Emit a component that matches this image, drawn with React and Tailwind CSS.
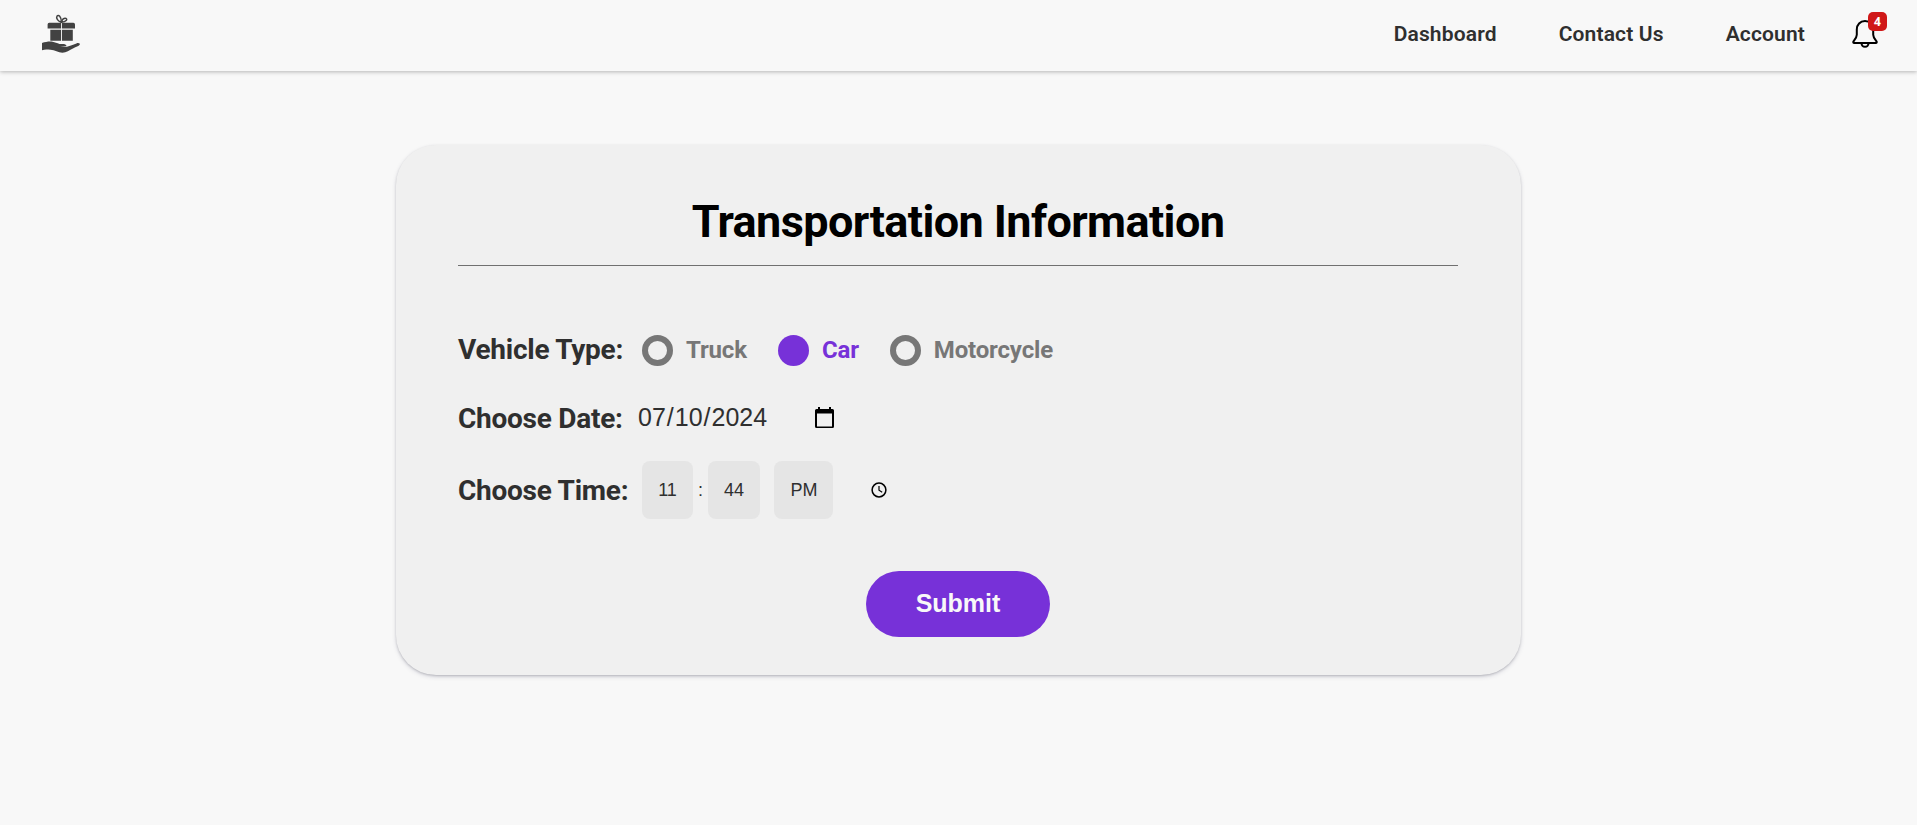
function GiftLogo() {
  return (
    <svg className="h-10 w-10" viewBox="0 0 40 40" fill="#424242">
      <g fill="none" stroke="#424242" strokeWidth="1.5">
        <path d="M20.300 9.200C17 8.200 14.800 5.200 16 3.200c1.300-1.900 4.500-.2 4.300 6z" />
        <path d="M20.500 9.200c.4-2.900 2.700-4.600 4.500-3.800 1.600.9.400 3.300-4.500 3.800z" />
      </g>
      <path d="M8.200 9.800h11.900v5.800H6.600v-4.200a1.600 1.600 0 0 1 1.600-1.600zM21 9.800h11.400a1.600 1.600 0 0 1 1.600 1.600v4.200H21z" />
      <path d="M9.300 16.800h10.800v11H9.300zM21 16.800h10.800v11H21z" />
      <path d="M1 29.900c3.500-.7 7-1.700 10.500-1.100 2.500.4 4.500 1.500 7 2.200h4.200c1.600.2 2.900.8 2.700 2.100l-6.300.3 6.900.3c3.200-1 6.200-2.300 9.400-3.300 2.500-.8 4 .2 3.300 1.300-1 1.200-3.800 2.300-6.300 3.500-4.200 1.900-6.900 4.300-11 4.500-4.300-.2-7.500-2.500-11.900-2.900-3.200-.2-5.500-.7-8.500.5z" />
    </svg>
  );
}

function BellIcon() {
  return (
    <svg className="h-8 w-8" viewBox="0 0 32 32" fill="none" stroke="#000" strokeWidth="2" strokeLinejoin="round">
      <path d="M16 3.100c-4.900 0-8.200 3.500-8.200 8.400v5.300c0 2.600-1.800 4.600-3.300 6.600-.5.800-.2 1.600.7 1.600h21.600c.9 0 1.200-.8.700-1.600-1.500-2-3.300-4-3.300-6.600v-5.300c0-4.900-3.300-8.400-8.200-8.400z" />
      <path d="M12.400 25c.2 2.300 1.600 3.800 3.600 3.800s3.400-1.500 3.600-3.800" />
    </svg>
  );
}

function Header() {
  return (
    <header className="flex h-[71px] items-start justify-between bg-[#f8f8f8] pr-9 pl-[41px] shadow-[0_1px_4px_rgba(0,0,0,0.27)]">
      <div className="pt-[13px]">
        <GiftLogo />
      </div>
      <nav className="flex items-center pt-[18px] text-[21px] leading-8 font-semibold tracking-[0.15px] text-[#2f2f2f]">
        <a className="mr-[62px]">Dashboard</a>
        <a className="mr-[62px]">Contact Us</a>
        <a className="mr-[44px]">Account</a>
        <div className="relative h-8 w-8 tracking-normal">
          <BellIcon />
          <span className="absolute -top-[6px] left-[19px] flex h-[19px] w-[19px] items-center justify-center rounded-[5px] bg-[#d01818] font-['Open_Sans',sans-serif] text-[12px] leading-none font-bold text-white">
            4
          </span>
        </div>
      </nav>
    </header>
  );
}

function RadioOption({ label, checked }) {
  return (
    <label className={checked ? "flex items-center gap-[13px] text-[#7731d8]" : "flex items-center gap-[13px] text-[#777777]"}>
      <span
        className={
          checked
            ? "h-[31px] w-[31px] rounded-full bg-[#7731d8]"
            : "h-[31px] w-[31px] rounded-full border-[6px] border-[#777777]"
        }
      />
      <span className="text-[24px] leading-8 font-bold tracking-[-0.15px]">{label}</span>
    </label>
  );
}

function FieldLabel({ children }) {
  return <span className="text-[28px] leading-8 font-bold tracking-[-0.25px] text-[#2f2f2f]">{children}</span>;
}

function CalendarIcon() {
  return (
    <svg className="mb-[3px] h-[21px] w-[19px]" viewBox="0 0 19 21">
      <path d="M3 0h2v2h9V0h2v2h1.500A1.500 1.500 0 0 1 19 3.500v16a1.500 1.500 0 0 1-1.500 1.500h-16A1.500 1.500 0 0 1 0 19.500v-16A1.500 1.500 0 0 1 1.500 2H3zM2 6.500v13h15v-13z" fillRule="evenodd" />
    </svg>
  );
}

function ClockIcon() {
  return (
    <svg className="h-4 w-4" viewBox="0 0 16 16" fill="none" stroke="#000">
      <circle cx="8" cy="8" r="6.900" strokeWidth="1.500" />
      <path d="M8 4v4.200l3.200 2" strokeWidth="1.200" />
    </svg>
  );
}

export default function App() {
  return (
    <div className="min-h-screen bg-[#f8f8f8] font-[Roboto,sans-serif]">
      <Header />
      <main className="flex justify-center pt-[74px]">
        <section className="flex h-[530px] w-[1125px] flex-col rounded-[40px] bg-[#f0f0f0] pr-[63px] pl-[62px] shadow-[0_2px_5px_-1px_rgba(50,50,93,0.25),0_1px_3px_-1px_rgba(0,0,0,0.3)]">
          <h1 className="h-[121px] border-b border-[#707070] pt-[50px] text-center text-[45px] leading-[53px] font-bold tracking-[-0.6px] text-black">
            Transportation Information
          </h1>
          <div className="mt-[68px] flex h-8 items-center">
            <div className="w-[184px]">
              <FieldLabel>Vehicle Type:</FieldLabel>
            </div>
            <div className="flex gap-[31px]">
              <RadioOption label="Truck" />
              <RadioOption label="Car" checked />
              <RadioOption label="Motorcycle" />
            </div>
          </div>
          <div className="mt-[37px] flex h-8 items-center">
            <div className="w-[179px]">
              <FieldLabel>Choose Date:</FieldLabel>
            </div>
            <div className="flex w-[178px] pb-[4px] font-['Liberation_Sans',sans-serif] text-[25px] leading-8 text-[#2f2f2f]">
              <span className="px-px">07</span>/<span className="px-px">10</span>/<span className="px-px">2024</span>
            </div>
            <CalendarIcon />
          </div>
          <div className="mt-[26px] flex h-[58px] items-center font-['Liberation_Sans',sans-serif] text-[18px] text-[#2f2f2f]">
            <div className="w-[184px] pt-[2px] font-[Roboto,sans-serif]">
              <FieldLabel>Choose Time:</FieldLabel>
            </div>
            <span className="flex h-[58px] w-[51px] items-center justify-center rounded-[8px] bg-[#e5e5e5]">11</span>
            <span className="w-[15px] text-center">:</span>
            <span className="flex h-[58px] w-[52px] items-center justify-center rounded-[8px] bg-[#e5e5e5]">44</span>
            <span className="mr-[38px] ml-[14px] flex h-[58px] w-[59px] items-center justify-center rounded-[8px] bg-[#e5e5e5] pl-px">
              PM
            </span>
            <ClockIcon />
          </div>
          <button className="mt-[52px] h-[66px] w-[184px] self-center rounded-full bg-[#7731d8] font-['Liberation_Sans',sans-serif] text-[25px] font-bold text-[#f8f8f8]">
            Submit
          </button>
        </section>
      </main>
    </div>
  );
}
